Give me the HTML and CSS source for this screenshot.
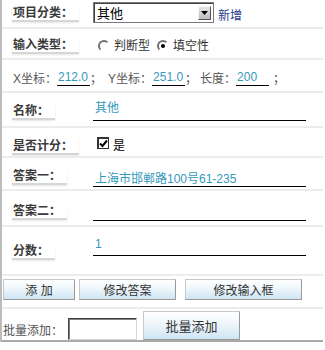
FILE: index.html
```html
<!DOCTYPE html>
<html lang="zh-CN">
<head>
    <meta charset="UTF-8">
    <title>项目编辑</title>
    <link rel="stylesheet" href="styles.css">
</head>
<body>
    <div class="panel">
        <div class="row row-cat">
            <div class="lbl-cell"><span class="lbl">项目分类：</span></div>
            <div class="fake-select">
                <span class="sel-text">其他</span>
                <span class="sel-btn">
                    <svg width="7" height="4" viewBox="0 0 7 4"><path d="M0 0h7L3.5 4z" fill="#000"/></svg>
                </span>
            </div>
            <a class="add-link" href="#">新增</a>
        </div>

        <div class="row row-type">
            <div class="lbl-cell"><span class="lbl">输入类型：</span></div>
            <label class="opt"><span class="radio"></span>判断型</label>
            <label class="opt"><span class="radio checked"></span>填空性</label>
        </div>

        <div class="row row-pos">
            <span class="txt">X坐标：</span>
            <input class="small-input" type="text" value="212.0">
            <span class="txt">；</span>
            <span class="txt y-lbl">Y坐标：</span>
            <input class="small-input" type="text" value="251.0">
            <span class="txt">；</span>
            <span class="txt len-lbl">长度：</span>
            <input class="small-input" type="text" value="200">
            <span class="txt semi-last">；</span>
        </div>

        <div class="row row-name">
            <div class="lbl-cell"><span class="lbl">名称：</span></div>
            <input class="line-input name-input" type="text" value="其他">
        </div>

        <div class="row row-score-flag">
            <div class="lbl-cell"><span class="lbl">是否计分：</span></div>
            <span class="check">
                <svg width="9" height="9" viewBox="0 0 9 9"><path d="M1 4.5l2.5 2.5L8 1.5" stroke="#000" stroke-width="2" fill="none"/></svg>
            </span>
            <span class="check-text">是</span>
        </div>

        <div class="row row-ans1">
            <div class="lbl-cell"><span class="lbl">答案一：</span></div>
            <input class="line-input" type="text" value="上海市邯郸路100号61-235">
        </div>

        <div class="row row-ans2">
            <div class="lbl-cell"><span class="lbl">答案二：</span></div>
            <input class="line-input" type="text" value="">
        </div>

        <div class="row row-score">
            <div class="lbl-cell"><span class="lbl">分数：</span></div>
            <input class="line-input score-input" type="text" value="1">
        </div>

        <div class="row row-btns">
            <button class="btn btn-add">添 加</button>
            <button class="btn btn-ans">修改答案</button>
            <button class="btn btn-box">修改输入框</button>
        </div>

        <div class="row row-batch">
            <span class="batch-lbl">批量添加：</span>
            <input class="batch-input" type="text">
            <button class="btn btn-batch">批量添加</button>
        </div>
    </div>
</body>
</html>
```

FILE: styles.css
```css
body {
    margin: 0;
    font-family: "Liberation Sans", "Noto Sans CJK SC", sans-serif;
    font-size: 12px;
    color: #333;
    background: #fff;
}
.panel {
    width: 321px;
    border-left: 2px solid #bcbcbc;
}
.row {
    display: flex;
    align-items: flex-start;
    border-bottom: 2px solid #ececec;
}
.lbl-cell {
    width: 91px;
    padding-left: 10px;
    box-sizing: border-box;
    flex: none;
}
.lbl {
    display: inline-block;
    line-height: 14px;
    padding: 0 6px 0 1px;
    font-weight: bold;
    color: #3a3a3a;
    border-bottom: 2px solid #d6d6d6;
    box-shadow: 0 1px 2px #e6e6e6;
}

/* row heights */
.row-cat { height: 27px; }
.row-type { height: 29px; }
.row-pos { height: 33px; }
.row-name { height: 33px; }
.row-score-flag { height: 28px; }
.row-ans1 { height: 31px; }
.row-ans2 { height: 34px; }
.row-score { height: 47px; }
.row-btns { height: 31px; }
.row-batch { height: 31px; border-bottom-color: #a9a9a9; }

.row-cat .lbl { margin-top: 6px; }
.row-type .lbl { margin-top: 9px; }
.row-name .lbl { margin-top: 11px; }
.row-score-flag .lbl { margin-top: 11px; }
.row-ans1 .lbl { margin-top: 11px; }
.row-ans2 .lbl { margin-top: 13px; }
.row-score .lbl { margin-top: 17px; }

/* select */
.fake-select {
    margin-top: 2px;
    width: 121px;
    height: 21px;
    box-sizing: border-box;
    border: 1px solid #7a7a7a;
    box-shadow: inset 1px 1px 0 #404040;
    display: flex;
    align-items: center;
    justify-content: space-between;
    background: #fff;
}
.sel-text {
    padding-left: 3px;
    font-size: 13px;
    color: #000;
}
.sel-btn {
    width: 13px;
    height: 14px;
    margin-right: 2px;
    box-sizing: border-box;
    border: 1px solid;
    border-color: #f4f4f4 #555 #555 #f4f4f4;
    background: linear-gradient(#e6e6e6, #bdbdbd);
    display: flex;
    align-items: center;
    justify-content: center;
}
.add-link {
    margin: 9px 0 0 4px;
    line-height: 14px;
    color: #1d3a8c;
    text-decoration: none;
}

/* radios */
.opt {
    display: flex;
    align-items: center;
    margin-top: 10px;
    line-height: 14px;
    color: #333;
    margin-right: 7px;
}
.row-type .opt:first-of-type { margin-left: 5px; }
.radio {
    width: 12px;
    height: 12px;
    box-sizing: border-box;
    border-radius: 50%;
    border: 2px solid;
    border-color: #707070 #fff #fff #707070;
    background: #fff;
    margin-right: 4px;
    position: relative;
}
.radio.checked::after {
    content: "";
    position: absolute;
    left: 2px;
    top: 2px;
    width: 4px;
    height: 4px;
    border-radius: 50%;
    background: #000;
}

/* coordinates row */
.row-pos {
    align-items: flex-end;
    padding-left: 11px;
    box-sizing: border-box;
    padding-bottom: 5px;
}
.txt {
    line-height: 14px;
    color: #555;
}
.small-input {
    width: 33px;
    height: 18px;
    box-sizing: border-box;
    padding: 0 0 0 1px;
    border: none;
    border-bottom: 1px solid #000;
    font: 12px "Liberation Sans", "Noto Sans CJK SC", sans-serif;
    color: #3399bb;
    outline: none;
}
.y-lbl { margin-left: 6px; }
.len-lbl { margin-left: 3px; }
.semi-last { margin-left: 4px; }

/* underlined inputs */
.line-input {
    width: 209px;
    margin-top: 11px;
    padding: 0 2px 1px;
    line-height: 14px;
    height: 16px;
    box-sizing: content-box;
    border: none;
    border-bottom: 1px solid #000;
    font: 12px "Liberation Sans", "Noto Sans CJK SC", sans-serif;
    color: #3399bb;
    outline: none;
    background: transparent;
}
.name-input {
    margin-top: 2px;
    padding: 4px 2px 7px;
    height: 14px;
}
.row-ans2 .line-input { margin-top: 12px; }
.score-input {
    margin-top: 9px;
    padding-bottom: 3px;
}

/* checkbox */
.check {
    width: 12px;
    height: 12px;
    box-sizing: border-box;
    margin: 9px 0 0 4px;
    border: 1px solid #333;
    border-left-width: 2px;
    border-top-width: 2px;
    display: flex;
    align-items: center;
    justify-content: center;
    background: #fff;
}
.check-text {
    margin: 11px 0 0 4px;
    line-height: 14px;
    color: #000;
}

/* buttons */
.btn {
    height: 21px;
    box-sizing: border-box;
    border: 1px solid #9a9a9a;
    border-top-color: #c8c8c8;
    border-left-color: #c8c8c8;
    background: linear-gradient(#ffffff, #eef6fb 45%, #cfe5f4);
    font: 12px "Liberation Sans", "Noto Sans CJK SC", sans-serif;
    color: #333;
    padding: 0;
    cursor: pointer;
}
.btn-add { width: 72px; margin: 3px 0 0 1px; }
.btn-ans { width: 97px; margin: 3px 0 0 4px; }
.btn-box { width: 117px; margin: 3px 0 0 9px; }

.batch-lbl {
    margin: 15px 0 0 1px;
    line-height: 14px;
    color: #555;
}
.batch-input {
    width: 69px;
    height: 22px;
    box-sizing: border-box;
    margin: 9px 0 0 5px;
    border: 1px solid;
    border-color: #404040 #d8d8d8 #d8d8d8 #404040;
    box-shadow: inset 1px 1px 0 #808080;
    outline: none;
}
.btn-batch {
    width: 97px;
    height: 29px;
    margin: 2px 0 0 6px;
    font-size: 13px;
}
```
